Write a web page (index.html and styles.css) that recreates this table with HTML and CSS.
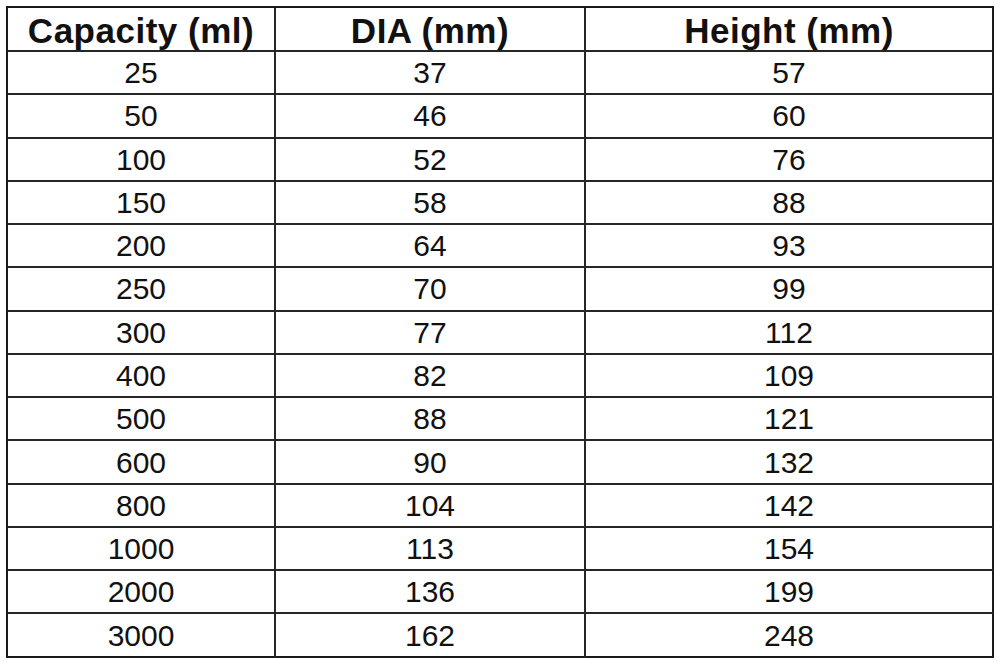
FILE: index.html
```html
<!DOCTYPE html>
<html>
<head>
<meta charset="utf-8">
<link rel="stylesheet" href="styles.css">
</head>
<body>
<div class="wrap">
<table class="spec">
  <colgroup>
    <col class="c1"><col class="c2"><col class="c3">
  </colgroup>
  <thead>
    <tr><th>Capacity (ml)</th><th>DIA (mm)</th><th>Height (mm)</th></tr>
  </thead>
  <tbody>
    <tr><td>25</td><td>37</td><td>57</td></tr>
    <tr><td>50</td><td>46</td><td>60</td></tr>
    <tr><td>100</td><td>52</td><td>76</td></tr>
    <tr><td>150</td><td>58</td><td>88</td></tr>
    <tr><td>200</td><td>64</td><td>93</td></tr>
    <tr><td>250</td><td>70</td><td>99</td></tr>
    <tr><td>300</td><td>77</td><td>112</td></tr>
    <tr><td>400</td><td>82</td><td>109</td></tr>
    <tr><td>500</td><td>88</td><td>121</td></tr>
    <tr><td>600</td><td>90</td><td>132</td></tr>
    <tr><td>800</td><td>104</td><td>142</td></tr>
    <tr><td>1000</td><td>113</td><td>154</td></tr>
    <tr><td>2000</td><td>136</td><td>199</td></tr>
    <tr><td>3000</td><td>162</td><td>248</td></tr>
  </tbody>
</table>
</div>
</body>
</html>
```
FILE: styles.css
```css
html, body {
  margin: 0;
  padding: 0;
  background: #ffffff;
}
.wrap {
  padding: 6px 0 0 6px;
}
.spec {
  border-spacing: 0;
  table-layout: fixed;
  width: 988px;
  border-left: 2px solid #1a1a1a;
  border-top: 2px solid #1a1a1a;
  font-family: "Liberation Sans", Arial, sans-serif;
  color: #111111;
}
.c1 { width: 268px; }
.c2 { width: 310px; }
.c3 { width: 408px; }
.spec th,
.spec td {
  box-sizing: border-box;
  border-right: 2px solid #262626;
  border-bottom: 2px solid #262626;
  padding: 0;
  text-align: center;
  vertical-align: middle;
}
.spec th {
  height: 44px;
  padding-top: 3px;
  font-size: 35px;
  font-weight: bold;
  letter-spacing: 0.5px;
  line-height: 1;
}
.spec td {
  height: 43.28px;
  padding-top: 1px;
  font-size: 30px;
  font-weight: normal;
  line-height: 1;
}
.spec th:last-child,
.spec td:last-child {
  border-right-color: #1a1a1a;
}
.spec tbody tr:last-child td {
  border-bottom-color: #1a1a1a;
}
```
